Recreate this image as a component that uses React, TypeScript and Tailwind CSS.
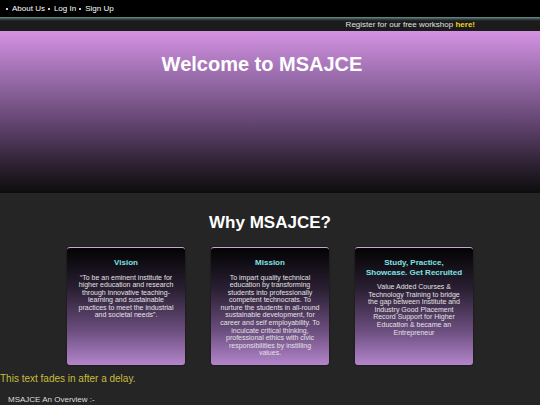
import React from 'react'

const CARDS = [
  {
    title: ['Vision'],
    body: '“To be an eminent institute for higher education and research through innovative teaching-learning and sustainable practices to meet the industrial and societal needs”.',
  },
  {
    title: ['Mission'],
    body: 'To impart quality technical education by transforming students into professionally competent technocrats. To nurture the students in all-round sustainable development, for career and self employability. To inculcate critical thinking, professional ethics with civic responsibilities by instilling values.',
  },
  {
    title: ['Study, Practice,', 'Showcase. Get Recruited'],
    body: 'Value Added Courses & Technology Training to bridge the gap between Institute and Industry Good Placement Record Support for Higher Education & became an Entrepreneur',
  },
]

function Nav() {
  return (
    <div className="flex h-[17px] items-center bg-black pl-[6px] text-[8px] text-white">
      {['About Us', 'Log In', 'Sign Up'].map(item => (
        <span key={item} className="flex items-center">
          <span className="mr-[4px] h-[2px] w-[2px] bg-[#cccccc]" />
          <span className="mr-[3px]">{item}</span>
        </span>
      ))}
    </div>
  )
}

export default function App() {
  return (
    <div className="min-h-[405px] bg-[#252525]" style={{ fontFamily: '"Liberation Sans", Arial, sans-serif' }}>
      <Nav />

      <div className="flex h-[14px] items-center justify-end bg-[linear-gradient(to_bottom,#6d9090_0px,#3a4a4a_2px,#1b1b1b_4px,#1b1b1b_100%)] pr-[65px] pt-[2px] text-[8px] text-[#e0e0e0]">
        Register for our free workshop&nbsp;<span className="font-bold text-[#f2d21e]">here!</span>
      </div>

      <div className="h-[162px] bg-[linear-gradient(to_bottom,#d592e3_0%,#a071b2_25%,#5c4069_60%,#2e2233_82%,#0d0d0d_100%)] pr-[16px] pt-[21px] text-center">
        <h1 className="text-[20px] font-bold leading-[24px] text-white">Welcome to MSAJCE</h1>
      </div>

      <h2 className="pt-[19px] text-center text-[17px] font-bold leading-[22px] text-white">Why MSAJCE?</h2>

      <div className="mt-[13px] flex justify-center gap-[26px]">
        {CARDS.map(c => (
          <div key={c.title[0]}
            className="h-[118px] w-[118px] rounded-[3px] border-t border-[#c9a6d8] bg-[linear-gradient(to_bottom,#030303_0%,#2a1f33_35%,#6a4d7d_70%,#b385cb_100%)] px-[9px] pt-[10px] text-center shadow-[0_0_2px_rgba(0,0,0,0.6)]">
            <div className="-mx-[6px] text-[8px] font-bold leading-[9.5px] text-[#7fe3e3]">
              {c.title.map(t => <div key={t}>{t}</div>)}
            </div>
            <p className="mt-[6px] text-[7px] leading-[7.6px] text-[#e2e2e2]">{c.body}</p>
          </div>
        ))}
      </div>

      <p className="mt-[7px] text-[10px] leading-[13px] text-[#c8bd3c]">This text fades in after a delay.</p>
      <p className="mt-[9px] pl-[8px] text-[8px] leading-[11px] text-[#dedede]">MSAJCE An Overview :-</p>
    </div>
  )
}
